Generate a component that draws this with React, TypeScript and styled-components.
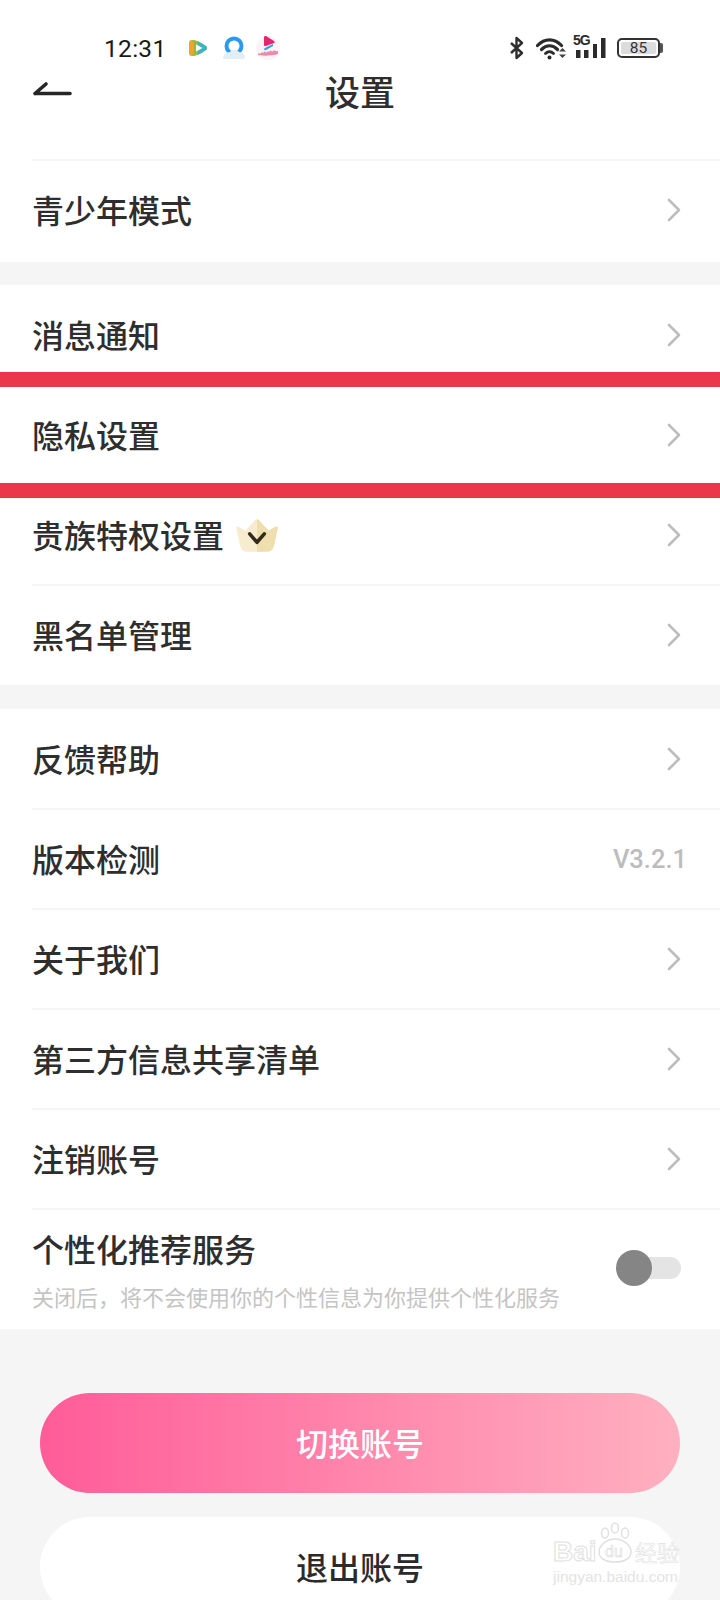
import styled, { createGlobalStyle } from "styled-components";

const GlobalStyle = createGlobalStyle`
  html, body {
    margin: 0;
    padding: 0;
    background: #f5f5f5;
  }
  * {
    box-sizing: border-box;
  }
`;

const Page = styled.div`
  position: relative;
  width: 720px;
  height: 1600px;
  overflow: hidden;
  background: #f5f5f5;
  color: #2e2e2e;
  font-family: "Noto Sans CJK SC", "Noto Sans", sans-serif;
`;

const Header = styled.div`
  background: #fff;
  height: 160px;
`;

const StatusBar = styled.div`
  height: 66px;
  padding: 28px 58px 0 104px;
  display: flex;
  align-items: flex-start;
  justify-content: space-between;
`;

const StatusGroup = styled.div`
  display: flex;
  align-items: center;
  height: 42px;
  margin-top: -1px;
`;

const Time = styled.span`
  font-family: Roboto, "Liberation Sans", sans-serif;
  font-size: 24.5px;
  letter-spacing: 0.3px;
  color: #1a1a1a;
  margin-right: 22px;
`;

const AppIcon = styled.svg<{ $left?: number }>`
  margin-left: ${(p) => p.$left ?? 0}px;
  margin-right: 9px;
`;

const WifiIcon = styled.svg`
  margin-left: 11px;
`;

const NetworkBox = styled.div`
  position: relative;
  width: 32px;
  height: 24px;
  margin-left: 7px;
`;

const FiveG = styled.span`
  position: absolute;
  left: -1px;
  top: -3px;
  font-family: "Liberation Sans", sans-serif;
  font-size: 14px;
  font-weight: 700;
  letter-spacing: -1px;
  line-height: 14px;
  color: #2b2b2b;
`;

const Battery = styled.div`
  position: relative;
  width: 43px;
  height: 20px;
  margin-left: 11px;
  margin-right: 2px;
  border: 2px solid #333;
  border-radius: 5px;
  padding: 2px;

  &::after {
    content: "";
    position: absolute;
    right: -5px;
    top: 3px;
    width: 3px;
    height: 10px;
    background: #555;
    border-radius: 0 2px 2px 0;
  }
`;

const BatteryFill = styled.div`
  height: 100%;
  border-radius: 2px;
  background: #dcdcdc;
  display: flex;
  align-items: center;
  justify-content: center;
  font-family: Roboto, "Liberation Sans", sans-serif;
  font-size: 15.5px;
  color: #333;
`;

const NavBar = styled.div`
  position: relative;
  height: 48px;
  display: flex;
  align-items: center;
  justify-content: center;
`;

const BackIcon = styled.svg`
  position: absolute;
  left: 32px;
  top: 14px;
`;

const Title = styled.h1`
  margin: 0;
  font-size: 35px;
  font-weight: 500;
  color: #2e2e2e;
`;

const Section = styled.section<{ $bottom?: number; $gap?: number }>`
  background: #fff;
  padding-bottom: ${(p) => p.$bottom ?? 0}px;
  margin-bottom: ${(p) => p.$gap ?? 0}px;
`;

const Row = styled.div<{ $tall?: boolean; $divider?: boolean }>`
  height: ${(p) => (p.$tall ? "120px" : "100px")};
  margin-left: 32px;
  padding-right: 39px;
  box-shadow: ${(p) =>
    p.$divider ? "0 -1px 0 #f5f5f5, inset 0 1px 0 #f5f5f5" : "none"};
  display: flex;
  align-items: center;
  justify-content: space-between;
`;

const RowLabel = styled.div`
  display: flex;
  align-items: center;
  margin-bottom: 3px;
  font-size: 32px;
  font-weight: 500;
  line-height: 40px;
  color: #2e2e2e;
`;

const Crown = styled.svg`
  margin-left: 11px;
  margin-top: 5px;
`;

const Version = styled.span`
  margin-right: -6px;
  font-family: Roboto, "Liberation Sans", sans-serif;
  font-size: 25.5px;
  font-weight: 500;
  color: #bcbcbc;
`;

const Stack = styled.div`
  display: flex;
  flex-direction: column;
  gap: 10px;
`;

const SubText = styled.div`
  font-size: 22px;
  line-height: 30px;
  color: #c4c4c4;
`;

const Toggle = styled.div`
  position: relative;
  width: 61px;
  height: 22px;
  margin-bottom: 2px;
  border-radius: 11px;
  background: #e4e4e4;

  &::before {
    content: "";
    position: absolute;
    left: -4px;
    top: -7px;
    width: 36px;
    height: 36px;
    border-radius: 50%;
    background: #858585;
  }
`;

const Buttons = styled.div`
  padding: 64px 40px 0;
  display: flex;
  flex-direction: column;
  gap: 24px;
`;

const PillButton = styled.button<{ $primary?: boolean }>`
  height: 100px;
  flex: none;
  border: 0;
  border-radius: 50px;
  padding: 0 0 3px;
  font-family: inherit;
  font-size: 32px;
  font-weight: 500;
  color: ${(p) => (p.$primary ? "#fff" : "#2b2b2b")};
  background: ${(p) =>
    p.$primary ? "linear-gradient(90deg, #ff5c98 0%, #ffb0c0 100%)" : "#fff"};
`;

const Highlight = styled.div<{ $top: number }>`
  position: absolute;
  left: 0;
  right: 0;
  top: ${(p) => p.$top}px;
  height: 15px;
  background: #ea374c;
`;

const Watermark = styled.div`
  position: absolute;
  left: 552px;
  top: 1518px;
  width: 128px;
  height: 70px;
  color: transparent;
  -webkit-text-stroke: 1px #e0e0e0;
  font-family: "Liberation Sans", sans-serif;
`;

const WatermarkPaw = styled.svg`
  position: absolute;
  left: 44px;
  top: 4px;
`;

const WatermarkWord = styled.span`
  position: absolute;
  left: 1px;
  top: 19px;
  font-size: 28px;
  line-height: 30px;
  font-weight: 700;
`;

const WatermarkDu = styled.span`
  position: absolute;
  left: 53px;
  top: 24px;
  font-size: 16px;
  line-height: 20px;
  -webkit-text-stroke: 0.7px #e0e0e0;
`;

const WatermarkJing = styled.span`
  position: absolute;
  left: 83px;
  top: 18px;
  font-family: "Noto Sans CJK SC", sans-serif;
  font-size: 22px;
  line-height: 30px;
  -webkit-text-stroke: 0.6px #e0e0e0;
`;

const WatermarkUrl = styled.span`
  position: absolute;
  left: 1px;
  top: 49px;
  font-size: 15.5px;
  line-height: 20px;
  color: #e4e4e4;
  -webkit-text-stroke: 0;
  white-space: nowrap;
`;

const Chevron = () => (
  <svg width="14" height="24" viewBox="0 0 14 24" fill="none">
    <path d="M2 2l10 10L2 22" stroke="#bdbdbd" strokeWidth="2.6" strokeLinecap="round" strokeLinejoin="round" />
  </svg>
);

const CrownIcon = () => (
  <Crown width="44" height="34" viewBox="0 0 42 32">
    <path d="M1 8c0-1 1-1 2-1l7 4 9-10c1-1 3-1 4 0l9 10 7-4c1 0 2 0 2 1l-4 18c-1 3-3 5-6 5H11c-3 0-5-2-6-5z" fill="#f8ecd0" />
    <path d="M21 0c1 0 1.500 0 2 1l9 10 7-4c1 0 2 0 2 1l-4 18c-1 3-3 5-6 5H21z" fill="#f0dfae" />
    <path d="M14 14l7 8 7-8" fill="none" stroke="#33291c" strokeWidth="3.400" strokeLinecap="round" strokeLinejoin="round" />
  </Crown>
);

const group1 = ["消息通知", "隐私设置"];
const group2 = ["反馈帮助", "版本检测", "关于我们", "第三方信息共享清单", "注销账号"];

export default function App() {
  return (
    <Page>
      <GlobalStyle />
      <Header>
        <StatusBar>
          <StatusGroup>
            <Time>12:31</Time>
            <AppIcon width="19" height="18" viewBox="0 0 19 18">
              <path d="M3 1c5 0 10 3 14 6 1.500 1 1.500 3 0 4-4 3-9 6-14 6-2 0-3-1-3-3V4c0-2 1-3 3-3z" fill="#f0a428" />
              <path d="M8 2c3 1 6 3 9 5 1.500 1 1.500 3 0 4-3 2-6 4-9 5 2-4 2-10 0-14z" fill="#38b6c8" />
              <path d="M3 1c3 4 3 12 0 16 4 0 7-3 7-8s-3-8-7-8z" fill="#86c040" />
              <path d="M7 5.500l6.500 3.500L7 12.500z" fill="#fff" />
            </AppIcon>
            <AppIcon $left={5} width="24" height="24" viewBox="0 0 24 24">
              <circle cx="12" cy="10" r="7.500" fill="none" stroke="#2a9af0" strokeWidth="4" />
              <path d="M1 23c0-4 3-7 7-7 2-3 7-3 9 0 3 0 6 3 6 5 0 1-1 2-2 2z" fill="#e2edf6" />
            </AppIcon>
            <svg width="26" height="26" viewBox="0 0 26 26">
              <circle cx="13" cy="13" r="12" fill="#fbf3f5" />
              <path d="M9 2c0-1 1-1 2-1l8 5c1 1 1 2 0 2l-8 3c-1 0-2 0-2-1z" fill="#e8246e" />
              <path d="M10 13l8-4v2l-7 4c-1 .5-2 0-2-1z" fill="#2b9fe0" />
              <path d="M3 19c1-2 2 1 3-1s2 1 3-1 2 2 3 0 2 1 3-1 2 2 3 0 2 1 5 0v3c-6 2-16 2-20 1z" fill="#ec8aac" />
            </svg>
          </StatusGroup>
          <StatusGroup>
            <svg width="16" height="24" viewBox="0 0 16 24" fill="none">
              <path d="M2 7l11 10-5.500 5V2L13 7 2 17" stroke="#2e2e2e" strokeWidth="2.400" strokeLinejoin="round" />
            </svg>
            <WifiIcon width="31" height="24" viewBox="0 0 31 24" fill="none">
              <path d="M1.500 9.500c7-7.500 17-7.500 24 0" stroke="#2b2b2b" strokeWidth="3.200" strokeLinecap="round" />
              <path d="M5.500 13.500c5-5 11-5 16 0" stroke="#2b2b2b" strokeWidth="3.200" strokeLinecap="round" />
              <path d="M9.500 17.500c2.500-2.500 5.500-2.500 8 0" stroke="#2b2b2b" strokeWidth="2.800" strokeLinecap="round" />
              <circle cx="13.500" cy="21.500" r="2" fill="#2b2b2b" />
              <path d="M23 15.500l3.500-3.500 3.500 3.500zM23 18.500h7L26.500 22z" fill="#444" />
            </WifiIcon>
            <NetworkBox>
              <FiveG>5G</FiveG>
              <svg width="32" height="24" viewBox="0 0 32 24">
                <rect x="2" y="14" width="4.500" height="8" fill="#2b2b2b" />
                <rect x="10" y="14" width="4.500" height="8" fill="#2b2b2b" />
                <rect x="19" y="8" width="4" height="14" fill="#2b2b2b" />
                <rect x="27" y="2" width="4.500" height="20" fill="#2b2b2b" />
              </svg>
            </NetworkBox>
            <Battery>
              <BatteryFill>85</BatteryFill>
            </Battery>
          </StatusGroup>
        </StatusBar>
        <NavBar>
          <BackIcon width="40" height="18" viewBox="0 0 40 18" fill="none">
            <path d="M3 13.500h35M3 13.500L14 4" stroke="#262626" strokeWidth="3.600" strokeLinecap="round" />
          </BackIcon>
          <Title>设置</Title>
        </NavBar>
      </Header>

      <Section $bottom={2} $gap={23}>
        <Row $divider>
          <RowLabel>青少年模式</RowLabel>
          <Chevron />
        </Row>
      </Section>

      <Section $gap={24}>
        {group1.map((label) => (
          <Row key={label}>
            <RowLabel>{label}</RowLabel>
            <Chevron />
          </Row>
        ))}
        <Row>
          <RowLabel>
            贵族特权设置
            <CrownIcon />
          </RowLabel>
          <Chevron />
        </Row>
        <Row $divider>
          <RowLabel>黑名单管理</RowLabel>
          <Chevron />
        </Row>
      </Section>

      <Section>
        {group2.map((label, i) => (
          <Row key={label} $divider={i > 0}>
            <RowLabel>{label}</RowLabel>
            {label === "版本检测" ? <Version>V3.2.1</Version> : <Chevron />}
          </Row>
        ))}
        <Row $tall $divider>
          <Stack>
            <RowLabel>个性化推荐服务</RowLabel>
            <SubText>关闭后，将不会使用你的个性信息为你提供个性化服务</SubText>
          </Stack>
          <Toggle />
        </Row>
      </Section>

      <Buttons>
        <PillButton $primary>切换账号</PillButton>
        <PillButton>退出账号</PillButton>
      </Buttons>

      <Highlight $top={372} />
      <Highlight $top={483} />

      <Watermark>
        <WatermarkWord>Bai</WatermarkWord>
        <WatermarkPaw width="38" height="42" viewBox="0 0 38 42" fill="none" stroke="#e0e0e0" strokeWidth="1.500">
          <ellipse cx="9" cy="11" rx="3.500" ry="5" />
          <ellipse cx="19" cy="6" rx="3.500" ry="5" />
          <ellipse cx="29" cy="11" rx="3.500" ry="5" />
          <path d="M3 30c0-7 8-13 16-13s16 6 16 13c0 6-6 10-16 10S3 36 3 30z" />
        </WatermarkPaw>
        <WatermarkDu>du</WatermarkDu>
        <WatermarkJing>经验</WatermarkJing>
        <WatermarkUrl>jingyan.baidu.com</WatermarkUrl>
      </Watermark>
    </Page>
  );
}
